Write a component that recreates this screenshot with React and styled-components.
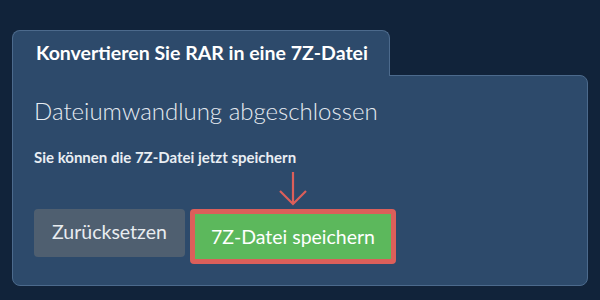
import React from 'react';
import styled, { createGlobalStyle } from 'styled-components';

const GlobalStyle = createGlobalStyle`
    html, body {
        margin: 0;
        padding: 0;
        background: #11233a;
        font-family: Lato, "Open Sans", sans-serif;
    }
`;

const Page = styled.div`
    width: 600px;
    height: 300px;
    box-sizing: border-box;
    padding: 30px 12px 0 12px;
`;

const Tab = styled.div`
    position: relative;
    z-index: 1;
    width: 378px;
    height: 46px;
    box-sizing: border-box;
    margin-bottom: -1px;
    padding-left: 23px;
    padding-bottom: 2px;
    display: flex;
    align-items: center;
    background: #2d4a6b;
    border: 1px solid #4c6a8c;
    border-bottom: none;
    border-radius: 8px 8px 0 0;
    color: #ffffff;
    font-weight: 700;
    font-size: 19.5px;
`;

const Panel = styled.div`
    height: 211px;
    box-sizing: border-box;
    padding: 20px 21px 0 21px;
    background: #2d4a6b;
    border: 1px solid #4c6a8c;
    border-radius: 0 8px 8px 8px;
`;

const Heading = styled.div`
    color: #e6ebf1;
    font-weight: 300;
    font-size: 24px;
    line-height: 30px;
`;

const Note = styled.div`
    margin-top: 21px;
    color: #e9eef3;
    font-weight: 700;
    font-size: 15px;
    line-height: 20px;
`;

const Buttons = styled.div`
    margin-top: 42px;
    display: flex;
    align-items: flex-start;
    gap: 5px;
`;

const Button = styled.div`
    box-sizing: border-box;
    display: flex;
    align-items: center;
    justify-content: center;
    font-size: 19.5px;
    color: ${p => p.$primary ? '#ffffff' : '#e8ecf0'};
    background: ${p => p.$primary ? '#5cb85c' : '#4f5f70'};
    width: ${p => p.$primary ? '206px' : '151px'};
    height: ${p => p.$primary ? '55px' : '48px'};
    border: ${p => p.$primary ? '5px solid #dc5f5a' : 'none'};
    border-radius: 4px;
    padding-bottom: ${p => p.$primary ? '1px' : '3px'};
`;

const Highlight = styled.div`
    position: relative;
`;

const Arrow = styled.svg`
    position: absolute;
    left: 88px;
    top: -38px;
`;

export default function App() {
    return (
        <Page>
            <GlobalStyle />
            <Tab>Konvertieren Sie RAR in eine 7Z-Datei</Tab>
            <Panel>
                <Heading>Dateiumwandlung abgeschlossen</Heading>
                <Note>Sie können die 7Z-Datei jetzt speichern</Note>
                <Buttons>
                    <Button>Zurücksetzen</Button>
                    <Highlight>
                        <Arrow width="30" height="36" viewBox="0 0 30 36">
                            <path d="M15 1 V33 M2 20 L15 33 L28 20" fill="none" stroke="#dc5f5a" strokeWidth="2.2" />
                        </Arrow>
                        <Button $primary>7Z-Datei speichern</Button>
                    </Highlight>
                </Buttons>
            </Panel>
        </Page>
    );
}
